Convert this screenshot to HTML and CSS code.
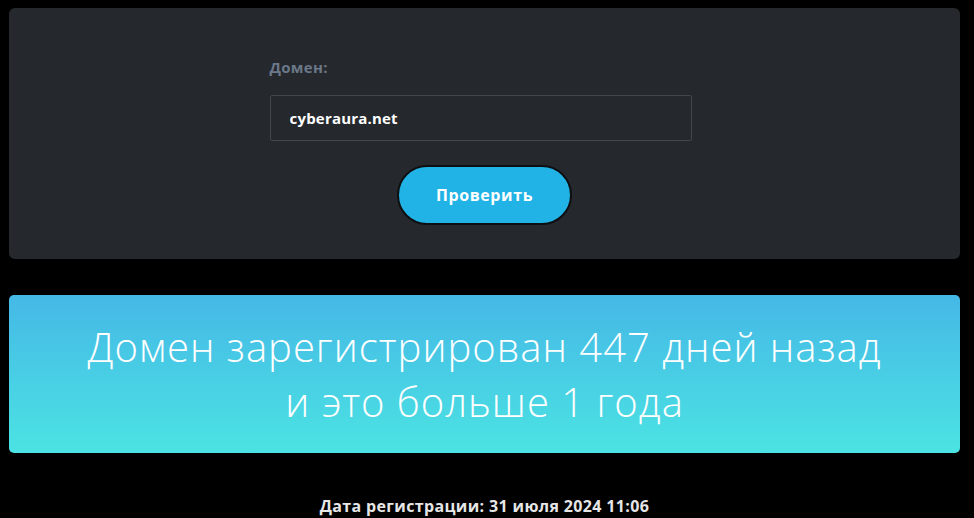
FILE: index.html
```html
<!DOCTYPE html>
<html>
<head>
    <title>Проверка возраста домена</title>
    <meta name="viewport" content="width=device-width, initial-scale=1.0">
    <link rel="stylesheet" href="styles.css">
</head>
<body>
    <div id="page">
        <form id="check-form" onsubmit="return false;">
            <div class="field">
                <label for="domain">Домен:</label>
                <input id="domain" type="text" value="cyberaura.net">
            </div>
            <button class="button" type="submit">Проверить</button>
        </form>
        <div id="result">
            Домен зарегистрирован 447 дней назад<br>
            и это больше 1 года
        </div>
        <div id="reg-date">Дата регистрации: 31 июля 2024 11:06</div>
    </div>
</body>
</html>
```

FILE: styles.css
```css
body {
    font-family: "Open Sans", Arial, sans-serif;
    background-color: #000;
    color: #fff;
    margin: 0;
    padding: 0;
    overflow: hidden;
}
#page {
    padding: 8px 14px 0 9px;
}
#check-form {
    background-color: #25282d;
    border-radius: 6px;
    height: 251px;
    box-sizing: border-box;
    padding-top: 49px;
    display: flex;
    flex-direction: column;
    align-items: center;
}
.field {
    width: 422px;
    margin-right: 8px;
    display: flex;
    flex-direction: column;
}
.field label {
    color: #6b7889;
    font-size: 15px;
    font-weight: 700;
    line-height: 20px;
    margin-bottom: 18px;
    letter-spacing: 0.3px;
}
.field input {
    height: 46px;
    box-sizing: border-box;
    background-color: #25282d;
    border: 1.5px solid #43464c;
    border-radius: 2px;
    color: #fff;
    font-family: inherit;
    font-size: 15px;
    font-weight: 700;
    letter-spacing: 0.2px;
    padding: 0 19px;
    outline: none;
}
.button {
    margin-top: 24px;
    width: 175px;
    height: 60px;
    background-color: #22b3e6;
    color: #fff;
    border: 2px solid #0e0f11;
    border-radius: 30px;
    font-family: inherit;
    font-size: 16px;
    font-weight: 700;
    letter-spacing: 0.6px;
    padding: 0;
    cursor: pointer;
}
#result {
    margin-top: 36px;
    height: 158px;
    border-radius: 5px;
    background: linear-gradient(to bottom, #45b8e6, #4be3e3);
    display: flex;
    align-items: center;
    justify-content: center;
    text-align: center;
    font-size: 40px;
    font-weight: 300;
    letter-spacing: 1px;
    line-height: 55px;
}
#reg-date {
    text-align: center;
    margin-top: 42px;
    font-size: 16px;
    font-weight: 700;
    letter-spacing: 0.35px;
    color: #e6e6e6;
}
```
